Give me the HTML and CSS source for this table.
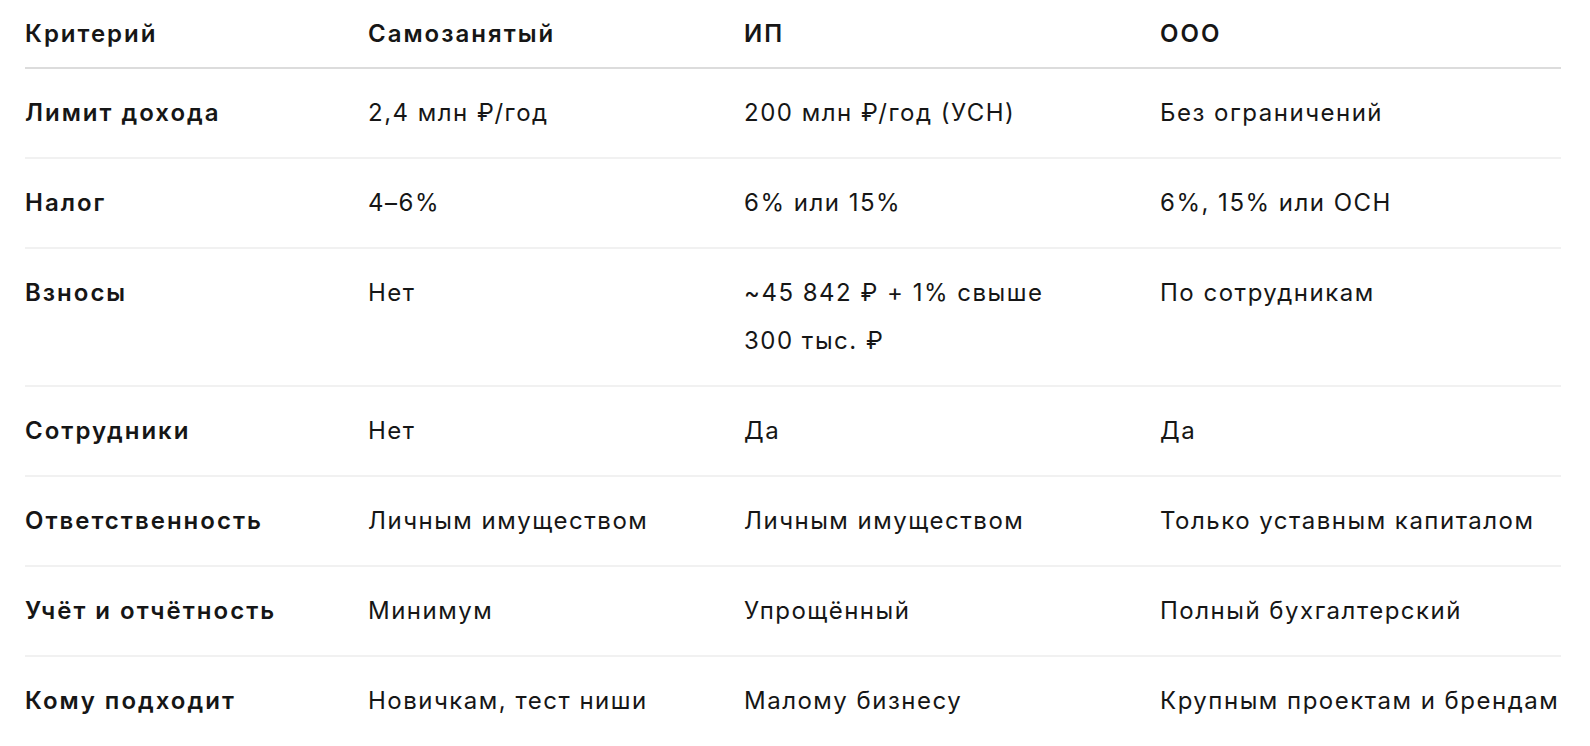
FILE: index.html
```html
<!DOCTYPE html>
<html lang="ru">
<head>
<meta charset="utf-8">
<title>Сравнение форм бизнеса</title>
<link rel="stylesheet" href="styles.css">
</head>
<body>
<div class="wrap">
<table class="cmp">
  <colgroup>
    <col class="c1"><col class="c2"><col class="c3"><col class="c4">
  </colgroup>
  <thead>
    <tr><th>Критерий</th><th>Самозанятый</th><th>ИП</th><th>ООО</th></tr>
  </thead>
  <tbody>
    <tr><th>Лимит дохода</th><td>2,4 млн ₽/год</td><td>200 млн ₽/год (УСН)</td><td>Без ограничений</td></tr>
    <tr><th>Налог</th><td>4–6%</td><td>6% или 15%</td><td>6%, 15% или ОСН</td></tr>
    <tr><th>Взносы</th><td>Нет</td><td>~45 842 ₽ + 1% свыше<br>300 тыс. ₽</td><td>По сотрудникам</td></tr>
    <tr><th>Сотрудники</th><td>Нет</td><td>Да</td><td>Да</td></tr>
    <tr><th>Ответственность</th><td>Личным имуществом</td><td>Личным имуществом</td><td>Только уставным капиталом</td></tr>
    <tr><th>Учёт и отчётность</th><td>Минимум</td><td>Упрощённый</td><td>Полный бухгалтерский</td></tr>
    <tr><th>Кому подходит</th><td>Новичкам, тест ниши</td><td>Малому бизнесу</td><td>Крупным проектам и брендам</td></tr>
  </tbody>
</table>
</div>
</body>
</html>
```

FILE: styles.css
```css
html, body {
  margin: 0;
  padding: 0;
  background: #ffffff;
}
body {
  font-family: Inter, "Noto Sans", "Liberation Sans", sans-serif;
  color: #161616;
}
.wrap {
  padding: 0 0 0 25px;
}
.cmp {
  width: 1536px;
  border-collapse: collapse;
  table-layout: fixed;
  font-size: 24px;
  line-height: 48px;
}
.c1 { width: 343px; }
.c2 { width: 376px; }
.c3 { width: 416px; }
.c4 { width: 401px; }
.cmp th, .cmp td {
  text-align: left;
  vertical-align: top;
  padding: 20px 0 20px 0;
  white-space: nowrap;
}
.cmp th {
  font-weight: 600;
  letter-spacing: 2px;
}
.cmp td {
  font-weight: 400;
  letter-spacing: 1.5px;
}
.cmp thead th {
  padding: 10px 0 9px 0;
  border-bottom: 2px solid #dcdcdc;
}
.cmp tbody tr {
  border-bottom: 2px solid #f1f1f1;
}
.cmp tbody tr:last-child {
  border-bottom: none;
}
```
